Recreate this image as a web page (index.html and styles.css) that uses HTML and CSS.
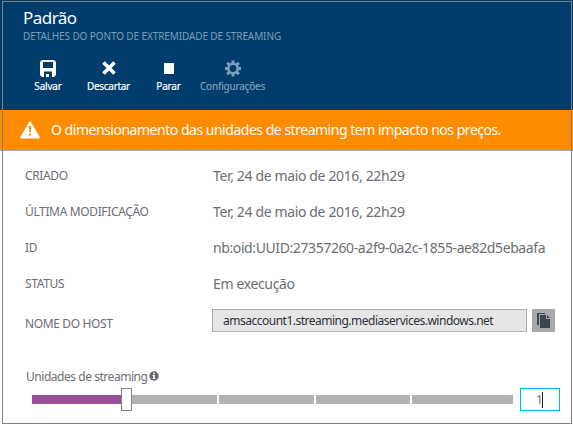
FILE: index.html
```html
<!DOCTYPE html>
<html lang="pt">
<head>
<meta charset="utf-8">
<title>Padrão</title>
<link rel="stylesheet" href="styles.css">
</head>
<body>
<main class="blade">
  <header class="header">
    <h1 class="title"><span>Padrão</span></h1>
    <p class="subtitle"><span>DETALHES DO PONTO DE EXTREMIDADE DE STREAMING</span></p>
    <nav class="toolbar">
      <div class="tool save">
        <svg width="16" height="17" viewBox="0 0 16 17"><path fill="#fff" fill-rule="evenodd" d="M2 0h12l2 2v13l-2 2h-2v-5.500H4V17H2l-2-2V2zM3 2v6h10V2zM6 14h3v3H6z"/></svg>
        <span>Salvar</span>
      </div>
      <div class="tool discard">
        <svg width="16" height="17" viewBox="0 0 16 17"><path stroke="#fff" stroke-width="3.6" d="M2.500 2.500l11 11M13.500 2.500l-11 11"/></svg>
        <span>Descartar</span>
      </div>
      <div class="tool stop">
        <svg width="16" height="17" viewBox="0 0 16 17"><path fill="#fff" d="M3 3h10v11H3z"/></svg>
        <span>Parar</span>
      </div>
      <div class="tool settings">
        <svg width="16" height="17" viewBox="0 0 16 17"><circle cx="8" cy="8.500" r="4.700" fill="none" stroke="#7f9db5" stroke-width="2.600"/><path stroke="#7f9db5" stroke-width="3" d="M8 .5v3M8 13.500v3M0 8.500h3M13 8.500h3M2.200 2.700l2 2M11.800 12.300l2 2M13.800 2.700l-2 2M4.200 12.300l-2 2"/></svg>
        <span>Configurações</span>
      </div>
    </nav>
  </header>
  <div class="warning">
    <svg width="20" height="18" viewBox="0 0 20 18"><path fill="#fff" stroke="#fff" stroke-width="2" stroke-linejoin="round" d="M10 1.400L18.800 16.600H1.200z"/><path fill="#ff8c00" d="M8.800 5h2.400l-.4 6H9.200zM9 12.500h2v2H9z"/></svg>
    <span>O dimensionamento das unidades de streaming tem impacto nos preços.</span>
  </div>
  <dl class="details">
    <dt>CRIADO</dt><dd>Ter, 24 de maio de 2016, 22h29</dd>
    <dt>ÚLTIMA MODIFICAÇÃO</dt><dd>Ter, 24 de maio de 2016, 22h29</dd>
    <dt>ID</dt><dd class="identifier">nb:oid:UUID:27357260-a2f9-0a2c-1855-ae82d5ebaafa</dd>
    <dt>STATUS</dt><dd>Em execução</dd>
  </dl>
  <div class="host">
    <span class="host-label">NOME DO HOST</span>
    <div class="host-value"><span>amsaccount1.streaming.mediaservices.windows.net</span></div>
    <div class="copy">
      <svg width="13" height="15" viewBox="0 0 13 15"><path fill="#3b4450" d="M0 0h8v1H2v11H0zM3 2h6v4h4v9H3zM10 2l3 3h-3z"/></svg>
    </div>
  </div>
  <div class="units-label">
    <span>Unidades de streaming</span>
    <svg width="10" height="10" viewBox="0 0 10 10"><circle cx="5" cy="5" r="4.700" fill="#66696d"/><path fill="#fff" d="M4.200 1.700h1.600v1.500H4.200zM3.500 4h2.300v3h.7v1h-3V7h.7V5h-.7z"/></svg>
  </div>
  <div class="units">
    <div class="slider">
      <i class="fill"></i><i class="thumb"></i><i class="track"></i><i class="track"></i><i class="track"></i><i class="track"></i>
    </div>
    <div class="number"><span>1</span><i class="caret"></i></div>
  </div>
  <div class="frame"></div>
</main>
</body>
</html>
```
FILE: styles.css
```css
* { box-sizing: border-box; }
body { margin: 0; background: #fff; font-family: "Noto Sans", "Open Sans", sans-serif; color: #6b6e73; }
h1, p, dl, dt, dd { margin: 0; font-weight: 400; }
span, dd, dt { white-space: nowrap; }
svg { display: block; flex: none; }
.blade { position: relative; width: 573px; height: 425px; overflow: hidden; }
.frame { position: absolute; left: 2px; top: 1px; width: 570px; height: 423px; border: 1px solid #808080; }
.header { height: 110px; padding: 6px 0 0 23px; background: #003c6c; color: #fff; }
.title { height: 24px; font-size: 17px; line-height: 24px; letter-spacing: -0.55px; }
.subtitle { height: 13px; font-size: 10px; line-height: 13px; color: #7f9db5; letter-spacing: -0.11px; }
.toolbar { display: flex; padding-top: 17px; }
.tool { display: flex; flex-direction: column; align-items: center; gap: 2px; font-size: 10px; line-height: 15px; letter-spacing: -0.2px; -webkit-text-stroke: .2px; }
.save { width: 50px; }
.discard { width: 71px; }
.stop { width: 49px; }
.settings { width: 79px; color: #7f9db5; }
.discard { letter-spacing: -0.3px; }
.warning { display: flex; align-items: center; gap: 11px; height: 41px; padding-left: 20px; background: #ff8c00; border-bottom: 1px solid #aaa; color: #fff; font-size: 14px; letter-spacing: -0.48px; }
.warning span { margin-top: -2px; }
.details { display: grid; grid-template-columns: 188px 1fr; grid-auto-rows: 36px; align-items: center; padding: 6px 0 0 25px; }
.details dt, .host-label { font-size: 12px; letter-spacing: -0.36px; }
.details dd { font-size: 14px; letter-spacing: -0.36px; }
.details .identifier { letter-spacing: -0.4px; }
.host { display: flex; align-items: center; height: 23px; margin-top: 8px; padding-left: 25px; }
.host-label { width: 187px; padding-top: 5px; }
.host-value { display: flex; align-items: center; width: 315px; height: 23px; padding-left: 10px; border: 1px solid #adadad; background: #e6e6e6; color: #30323b; font-size: 12px; letter-spacing: -0.5px; }
.copy { display: flex; align-items: center; justify-content: center; width: 23px; height: 23px; margin-left: 5px; background: #aaa; }
.units-label { display: flex; align-items: center; gap: 2px; height: 18px; margin-top: 35px; padding-left: 26px; font-size: 12px; letter-spacing: -0.46px; }
.units { display: flex; align-items: center; height: 23px; margin-top: 3px; padding-left: 32px; }
.slider { display: grid; grid-template-columns: 89px 11px 85px 97px 96px 103px; align-items: center; width: 481px; }
.track, .fill { height: 9px; background: #b2b2b2; }
.fill { background: #9b4f96; }
.track + .track { margin-left: 2px; }
.thumb { height: 23px; border: 1px solid #808080; background: #fff; }
.number { display: flex; align-items: center; justify-content: flex-end; width: 40px; height: 23px; margin-left: 7px; padding-right: 16px; border: 1px solid #00b4f0; font-size: 12px; }
.number span { width: 6px; }
.caret { width: 1px; height: 16px; background: #222; }
```
